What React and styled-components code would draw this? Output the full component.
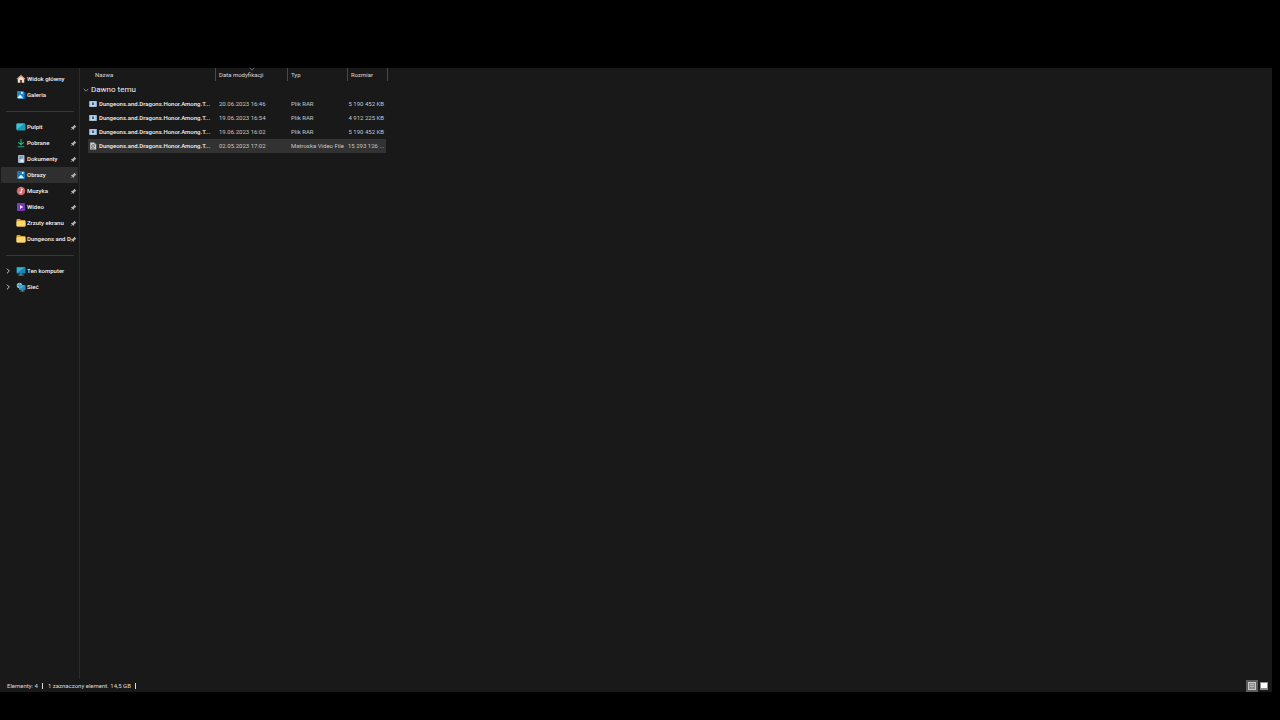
import React from 'react';
import styled, {createGlobalStyle} from 'styled-components';

const colors = {
  window: '#191919',
  active: '#2f2f2f',
  row: '#323232',
  line: '#363636',
  text: '#f4f4f4',
  muted: '#c8c8c8',
};

const GlobalStyle = createGlobalStyle`
  * {
    box-sizing: border-box;
  }
  body {
    margin: 0;
    background: #000;
    color: ${colors.text};
    font-family: Roboto, 'Open Sans', sans-serif;
    font-size: 6px;
    line-height: 14px;
  }
  button {
    font: inherit;
    color: inherit;
    border: 0;
    padding: 0;
    background: none;
  }
`;

const Screen = styled.div`
  display: flex;
  min-height: 100vh;
  padding: 68px 8px 28px 0;
`;

const Window = styled.div`
  flex: 1;
  min-width: 0;
  display: flex;
  flex-flow: column nowrap;
  background: ${colors.window};
`;

const Body = styled.div`
  flex: 1;
  display: flex;
`;

const Sidebar = styled.nav`
  flex: 0 0 80px;
  padding-top: 3px;
  border-right: 1px solid #2b2b2b;
`;

const List = styled.ul`
  margin: 0;
  padding: 0 1px;
  list-style: none;
`;

const Divider = styled.hr`
  height: 1px;
  margin: 8px 5px 7px 6px;
  border: 0;
  background: ${colors.line};
`;

const NavLink = styled.a`
  display: grid;
  grid-template-columns: 11px 11px 43px 8px;
  align-items: center;
  height: 16px;
  padding-left: 4px;
  border-radius: 1px;
  color: ${colors.text};
  font-weight: 500;
  text-decoration: none;
  background: ${props => (props.$active ? colors.active : 'none')};
`;

const Label = styled.span`
  line-height: 16px;
  white-space: nowrap;
`;

const Icon = styled.svg`
  display: block;
  flex: none;
  width: ${props => props.$size || 10}px;
  height: ${props => props.$size || 10}px;
`;

const Content = styled.main`
  flex: 1;
  min-width: 0;
  padding-left: 8px;
`;

const Table = styled.table`
  width: 300px;
  table-layout: fixed;
  border-collapse: separate;
  border-spacing: 0;
`;

const HeadCell = styled.th`
  position: relative;
  width: ${props => props.$width}px;
  height: 13px;
  padding: 0 0 0 ${props => (props.$first ? 7 : 3)}px;
  border-right: 1px solid #484848;
  line-height: 13px;
  font-weight: 400;
  text-align: left;
  color: #dcdcdc;
`;

const SortMark = styled.span`
  position: absolute;
  top: -2px;
  left: 50%;
  margin-left: -3px;
`;

const GroupCell = styled.th`
  height: 16px;
  padding: 2px 0 0;
  text-align: left;
  font-weight: 400;
`;

const GroupButton = styled.button`
  display: flex;
  align-items: center;
  gap: 2px;
  margin-left: -5px;
  font-size: 8px;
  line-height: 14px;
`;

const Cell = styled.td`
  height: 14px;
  padding: 0 0 0 3px;
  line-height: 14px;
  white-space: nowrap;
  color: ${colors.muted};
  &:first-child {
    padding-left: 1px;
  }
  &:last-child {
    padding: 0 2px 0 0;
    border-right: 2px solid transparent;
    background-clip: padding-box;
    text-align: right;
  }
`;

const Row = styled.tr`
  ${Cell} {
    background-color: ${props => (props.$selected ? colors.row : 'transparent')};
  }
`;

const FileName = styled.div`
  display: flex;
  align-items: center;
  gap: 2px;
  color: ${colors.text};
  font-weight: 500;
`;

const StatusBar = styled.footer`
  display: flex;
  align-items: center;
  height: 13px;
  padding: 0 2px 0 7px;
  color: #dcdcdc;
`;

const Status = styled.span`
  display: flex;
  align-items: center;
  gap: 4px;
  margin-right: 5px;
  line-height: 12px;
  &::after {
    content: '';
    width: 1px;
    height: 6px;
    background: #dcdcdc;
  }
`;

const Views = styled.div`
  display: flex;
  align-items: center;
  margin-left: auto;
`;

const ViewButton = styled.button`
  display: grid;
  place-items: center;
  width: 12px;
  height: 12px;
  background: ${props => (props.$active ? '#5c5c5c' : 'none')};
`;

const Chevron = ({down, color = '#ddd'}) => (
  <Icon $size={6} viewBox='0 0 6 6' fill='none' stroke={color} strokeWidth='0.9' aria-hidden='true'>
    <path d={down ? 'M.6 1.8 3 4.2 5.4 1.8' : 'M1.9.6 4.3 3 1.9 5.4'} />
  </Icon>
);

const Pin = () => (
  <Icon $size={7} viewBox='0 0 14 14' aria-hidden='true'>
    <path
      d='M8.6 1.4 12.6 5.4 11.4 6.4 10.2 6.6 8.3 8.8 8 11.2 7 12 4.8 9.7 1.8 12.6 1.2 12 4.2 9.1 2 7 2.9 6 5.3 5.7 7.5 3.8 7.6 2.5Z'
      fill='#b4b4b4'
    />
  </Icon>
);

const drawings = {
  home: (
    <>
      <path d='M3.5 8 10 3l6.5 5v9.5h-4.7V12H8.2v5.5H3.5Z' fill='#e3dcd8' />
      <path d='M8 12h4v5.5H8Z' fill='#7a3c20' />
      <path d='M2 10.2 10 3l8 7.2' fill='none' stroke='#d98a66' strokeWidth='2.4' />
    </>
  ),
  pictures: (
    <>
      <rect x='2' y='2' width='16' height='16' rx='2' fill='#1679b8' />
      <path d='M3.5 16.5 10 9.5l6.5 7Z' fill='#e8f7ff' />
      <circle cx='13.5' cy='6' r='1.8' fill='#fff' />
    </>
  ),
  gallery: (
    <>
      <rect x='5' y='4' width='14' height='14' rx='2' fill='#0a5fa8' />
      <rect x='2' y='2' width='14' height='15' rx='2' fill='#2186c8' />
      <path d='M3 15.5 8 9l6.5 7.5H4Z' fill='#e8f7ff' />
      <circle cx='12' cy='6' r='1.8' fill='#fff' />
    </>
  ),
  desktop: (
    <>
      <rect x='1' y='3' width='18' height='14' rx='2' fill='#1a9bb8' />
      <path d='M1 15V5q0-2 2-2h14Z' fill='#43c4d6' />
    </>
  ),
  downloads: (
    <path
      d='M10 2v11M4.5 8.5 10 13.5l5.5-5M3.5 17.500h13'
      fill='none'
      stroke='#30a880'
      strokeWidth='2.2'
    />
  ),
  documents: (
    <>
      <rect x='4' y='2' width='13' height='16' rx='2' fill='#a7b9cb' />
      <path d='M7 6h7M7 9h4' stroke='#536b84' strokeWidth='1.6' />
      <rect x='9' y='11' width='6' height='5' fill='#e7f0f8' />
    </>
  ),
  music: (
    <>
      <circle cx='10' cy='10' r='8.5' fill='#cf6a6e' />
      <path d='M11 13V5.5l3 2' fill='none' stroke='#fff' strokeWidth='1.6' />
      <circle cx='9' cy='13' r='2.2' fill='#f6dede' />
    </>
  ),
  video: (
    <>
      <rect x='2' y='2' width='16' height='16' rx='2' fill='#7437b4' />
      <path d='M4 3v14' stroke='#a77bd6' strokeWidth='1.5' strokeDasharray='2 2' />
      <path d='m8 6 6.500 4L8 14Z' fill='#f0ddff' />
    </>
  ),
  folder: (
    <>
      <path d='M1 4q0-2 2-2h5l2 2h7q2 0 2 2v9q0 2-2 2H3q-2 0-2-2Z' fill='#dca236' />
      <rect x='1' y='6' width='18' height='11' rx='2' fill='#f8d870' />
    </>
  ),
  computer: (
    <>
      <path d='M5 18h10M10 14v4' stroke='#6fa4b8' strokeWidth='2' />
      <rect x='1' y='2' width='18' height='13' rx='1.5' fill='#1687b8' />
      <path d='M2 14V3h15Z' fill='#35b2cd' />
    </>
  ),
  network: (
    <>
      <circle cx='7' cy='7' r='5.5' fill='#7fc6e8' />
      <path d='M2 7h10M7 2v10' stroke='#2b78a8' />
      <path d='M9 18h8M13 15v3' stroke='#6fa4b8' strokeWidth='1.8' />
      <rect x='6' y='6' width='13' height='10' rx='1.5' fill='#1d8fc6' />
      <path d='M7 15V7h10Z' fill='#45b4d6' />
    </>
  ),
  rar: (
    <>
      <rect x='1' y='3' width='18' height='14' fill='#dce8f2' />
      <rect x='1' y='3' width='3' height='14' fill='#8fb4d4' />
      <rect x='16' y='3' width='3' height='14' fill='#8fb4d4' />
      <rect x='7' y='6' width='6' height='7' fill='#2c66a4' />
    </>
  ),
  mkv: (
    <>
      <path d='M3 1h10l5 5v13H3Z' fill='#d0d0d0' />
      <path d='M13 1v5h5' fill='#8d8d8d' />
      <circle cx='10' cy='10' r='3.600' fill='none' stroke='#4c4c4c' strokeWidth='1.8' />
      <path d='M5 16h9' stroke='#555' strokeWidth='1.5' />
    </>
  ),
};

const Drawing = ({name, size}) => (
  <Icon $size={size} viewBox='0 0 20 20' aria-hidden='true'>
    {drawings[name]}
  </Icon>
);

const places = [
  [
    {label: 'Widok główny', icon: 'home'},
    {label: 'Galeria', icon: 'gallery'},
  ],
  [
    {label: 'Pulpit', icon: 'desktop', pinned: true},
    {label: 'Pobrane', icon: 'downloads', pinned: true},
    {label: 'Dokumenty', icon: 'documents', pinned: true},
    {label: 'Obrazy', icon: 'pictures', pinned: true, active: true},
    {label: 'Muzyka', icon: 'music', pinned: true},
    {label: 'Wideo', icon: 'video', pinned: true},
    {label: 'Zrzuty ekranu', icon: 'folder', pinned: true},
    {label: 'Dungeons and D', icon: 'folder', pinned: true},
  ],
  [
    {label: 'Ten komputer', icon: 'computer', expandable: true},
    {label: 'Sieć', icon: 'network', expandable: true},
  ],
];

const name = 'Dungeons.and.Dragons.Honor.Among.T...';

const files = [
  {date: '20.06.2023 16:46', type: 'Plik RAR', size: '5 190 452 KB', icon: 'rar'},
  {date: '19.06.2023 16:54', type: 'Plik RAR', size: '4 912 225 KB', icon: 'rar'},
  {date: '19.06.2023 16:02', type: 'Plik RAR', size: '5 190 452 KB', icon: 'rar'},
  {
    date: '02.05.2023 17:02',
    type: 'Matroska Video File',
    size: '15 293 126 ...',
    icon: 'mkv',
    selected: true,
  },
];

export default () => (
  <Screen>
    <GlobalStyle />
    <Window>
      <Body>
        <Sidebar>
          {places.map((group, index) => (
            <React.Fragment key={index}>
              {index > 0 && <Divider />}
              <List>
                {group.map(place => (
                  <li key={place.label}>
                    <NavLink href='#' $active={place.active}>
                      <span>{place.expandable && <Chevron />}</span>
                      <Drawing name={place.icon} />
                      <Label>{place.label}</Label>
                      {place.pinned && <Pin />}
                    </NavLink>
                  </li>
                ))}
              </List>
            </React.Fragment>
          ))}
        </Sidebar>
        <Content>
          <Table>
            <thead>
              <tr>
                <HeadCell $width={128} $first>
                  Nazwa
                </HeadCell>
                <HeadCell $width={72}>
                  Data modyfikacji
                  <SortMark>
                    <Chevron down color='#777' />
                  </SortMark>
                </HeadCell>
                <HeadCell $width={60}>Typ</HeadCell>
                <HeadCell $width={40}>Rozmiar</HeadCell>
              </tr>
            </thead>
            <tbody>
              <tr>
                <GroupCell colSpan={4}>
                  <GroupButton type='button'>
                    <Chevron down color='#999' />
                    Dawno temu
                  </GroupButton>
                </GroupCell>
              </tr>
              {files.map(file => (
                <Row key={file.date} $selected={file.selected}>
                  <Cell>
                    <FileName>
                      <Drawing name={file.icon} size={8} />
                      {name}
                    </FileName>
                  </Cell>
                  <Cell>{file.date}</Cell>
                  <Cell>{file.type}</Cell>
                  <Cell>{file.size}</Cell>
                </Row>
              ))}
            </tbody>
          </Table>
        </Content>
      </Body>
      <StatusBar>
        <Status>Elementy: 4</Status>
        <Status>1 zaznaczony element. 14,5 GB</Status>
        <Views>
          <ViewButton type='button' aria-label='Szczegóły' $active>
            <Icon $size={8} viewBox='0 0 8 8'>
              <rect x='0.5' y='0.5' width='7' height='7' fill='#8c8c8c' stroke='#c8c8c8' />
              <path d='M2 2.5h4M2 4.5h4' stroke='#bbb' />
            </Icon>
          </ViewButton>
          <ViewButton type='button' aria-label='Duże ikony'>
            <Icon $size={8} viewBox='0 0 8 8'>
              <rect width='8' height='8' fill='#8c8c8c' />
              <rect x='1' y='1' width='6' height='5' fill='#fff' />
            </Icon>
          </ViewButton>
        </Views>
      </StatusBar>
    </Window>
  </Screen>
);
